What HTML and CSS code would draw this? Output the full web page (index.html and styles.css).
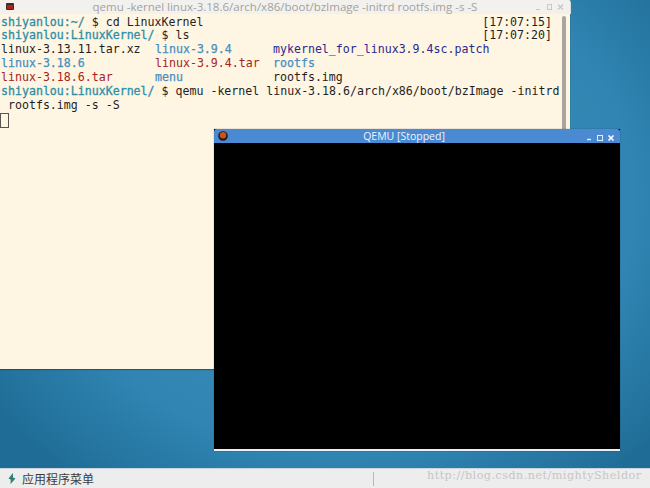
FILE: index.html
```html
<!DOCTYPE html>
<html lang="zh">
<head>
<meta charset="utf-8">
<title>QEMU</title>
<link rel="stylesheet" href="styles.css">
</head>
<body>
<div class="screen">
  <main class="desktop">
    <section class="window terminal">
      <header class="term-title">
        <svg class="term-icon" width="8" height="7" viewBox="0 0 8 7"><rect width="8" height="7" rx="1" fill="#3a2a2a"/><rect x="1" y="2" width="6" height="4" fill="#b3201c"/></svg>
        <span class="term-title-text">qemu -kernel linux-3.18.6/arch/x86/boot/bzImage -initrd rootfs.img -s -S</span>
        <span class="term-controls">
          <svg width="34" height="8" viewBox="0 0 34 8"><path d="M4 6.5h4" stroke="#c8c8c8" fill="none"/><rect x="15.5" y="1.5" width="4" height="5" stroke="#c8c8c8" fill="none"/><path d="M26 1.5l5 5M31 1.5l-5 5" stroke="#c8c8c8" fill="none" stroke-width="1.3"/></svg>
        </span>
      </header>
      <div class="term-body">
        <div class="term-text">
          <div class="line split"><span><b class="prompt">shiyanlou:~/</b> $ cd LinuxKernel</span><span>[17:07:15]</span></div>
          <div class="line split"><span><b class="prompt">shiyanlou:LinuxKernel/</b> $ ls</span><span>[17:07:20]</span></div>
          <div class="line cols"><span>linux-3.13.11.tar.xz</span><span class="dir">linux-3.9.4</span><span class="patch">mykernel_for_linux3.9.4sc.patch</span></div>
          <div class="line cols"><span class="dir">linux-3.18.6</span><span class="arch">linux-3.9.4.tar</span><span class="dir">rootfs</span></div>
          <div class="line cols"><span class="arch">linux-3.18.6.tar</span><span class="dir">menu</span><span>rootfs.img</span></div>
          <div class="line"><b class="prompt">shiyanlou:LinuxKernel/</b> $ qemu -kernel linux-3.18.6/arch/x86/boot/bzImage -initrd</div>
          <div class="line"> rootfs.img -s -S</div>
          <div class="line"><span class="cursor"></span></div>
        </div>
        <div class="scrollbar"></div>
      </div>
    </section>
    <section class="window qemu">
      <header class="qemu-title">
        <svg class="qemu-icon" width="10" height="10" viewBox="0 0 10 10"><circle cx="5" cy="5" r="4.8" fill="#2b1a12"/><circle cx="5" cy="4.2" r="3.2" fill="#c9531f"/></svg>
        <span class="qemu-title-text">QEMU [Stopped]</span>
        <span class="qemu-controls">
          <svg width="30" height="8" viewBox="0 0 30 8"><path d="M0 5.5h4" stroke="#e4eefa" fill="none" stroke-width="1.4"/><rect x="10.5" y="1.5" width="5" height="5" stroke="#e4eefa" fill="none"/><path d="M21.5 1.5l5 5M26.5 1.5l-5 5" stroke="#fff" fill="none" stroke-width="1.6"/></svg>
        </span>
      </header>
      <div class="qemu-screen"></div>
      <div class="qemu-foot"></div>
    </section>
  </main>
  <footer class="panel">
    <div class="menu">
      <svg class="menu-icon" width="8" height="11" viewBox="0 0 8 11"><path d="M5 0L0.5 5.5l2.2 1L2.5 11 7.5 5.5 5 4.5z" fill="#2f7f72"/></svg>
      <span class="menu-label">应用程序菜单</span>
    </div>
    <div class="divider"></div>
    <div class="watermark">http://blog.csdn.net/mightySheldor</div>
  </footer>
</div>
</body>
</html>
```
FILE: styles.css
```css
* { box-sizing: border-box; }
html, body { margin: 0; padding: 0; }
body { width: 650px; height: 488px; overflow: hidden; font-family: "DejaVu Sans", sans-serif; }
.screen { width: 650px; height: 488px; display: flex; flex-direction: column; }
.desktop {
  position: relative;
  height: 468px;
  background: radial-gradient(ellipse 420px 360px at 340px 200px, #3c90ba 0%, #3085b2 70%, #1f6d97 100%);
}
.window { position: absolute; }
.terminal {
  left: 0; top: 0; width: 570px; height: 369px;
  display: flex; flex-direction: column;
  background: #fff5e3;
  box-shadow: 0 1px 1px rgba(30,60,80,.6);
}
.term-title {
  height: 14px; flex: none;
  display: flex; align-items: center; justify-content: center;
  position: relative;
  background: #f3f1ee;
  border-radius: 3px 3px 0 0;
  box-shadow: 1px 0 0 #dcdcd8;
}
.term-icon { position: absolute; left: 6px; top: 3px; }
.term-title-text { font-family: "Open Sans", "DejaVu Sans", sans-serif; font-size: 11.5px; color: #a2a2a0; line-height: 14px; white-space: nowrap; }
.term-controls { position: absolute; right: 4px; top: 3px; display: flex; }
.term-body { flex: 1; display: flex; min-height: 0; }
.term-text {
  flex: 1;
  font-family: "DejaVu Sans Mono", monospace;
  font-size: 11.6px; line-height: 13.9px; color: #1f1f1f;
  padding: 1.6px 3px 0 1px; min-width: 0;
}
.line { height: 13.9px; white-space: pre; }
.split { display: flex; justify-content: space-between; padding-right: 7px; }
.cols { display: grid; grid-template-columns: 154px 118px 1fr; }
.prompt { font-weight: 400; color: #2d8fa6; -webkit-text-stroke: .3px #2d8fa6; }
.dir { color: #4590c0; -webkit-text-stroke: .25px #4590c0; }
.arch { color: #a5241f; }
.patch { color: #2b2a8c; }
.cursor { display: block; width: 9px; height: 15px; margin-left: -1px; border: 1px solid #555; background: #fff5e3; }
.scrollbar { width: 4px; flex: none; margin: 2px 4px 0 0; background: #a8a69f; border-radius: 2px; }
.qemu {
  left: 214px; top: 129px; width: 406px; height: 322px;
  display: flex; flex-direction: column;
  background: #000;
  box-shadow: 0 0 1px rgba(20,40,60,.5);
}
.qemu-title {
  height: 14px; flex: none;
  position: relative;
  display: flex; align-items: center; justify-content: center;
  padding-right: 26px;
  background: #4a8ad2;
  border-radius: 3px 3px 0 0;
}
.qemu-icon { position: absolute; left: 4px; top: 2px; }
.qemu-title-text { font-family: "Open Sans", "DejaVu Sans", sans-serif; font-size: 10.5px; color: #eef4fb; line-height: 14px; }
.qemu-controls { position: absolute; right: 3px; top: 5px; display: flex; }
.qemu-screen { flex: 1; background: #000; }
.qemu-foot { height: 2px; flex: none; background: #e8eff6; }
.panel {
  height: 20px; flex: none;
  display: flex; align-items: center;
  background: #ededed;
  border-top: 1px solid #c9d4de;
  position: relative;
}
.menu { display: flex; align-items: center; width: 373px; padding-left: 8px; gap: 6px; }
.menu-label { font-family: "Noto Sans CJK SC", sans-serif; font-size: 12px; color: #3c3c3c; line-height: 19px; }
.divider { width: 1px; height: 14px; background: #b9b9b9; flex: none; }
.watermark {
  margin-left: 53px;
  font-family: "DejaVu Serif", "Liberation Serif", serif;
  font-size: 11.2px; letter-spacing: .47px; color: #c6c6c6; white-space: nowrap; line-height: 19px;
  position: relative; top: -3px;
}
```
